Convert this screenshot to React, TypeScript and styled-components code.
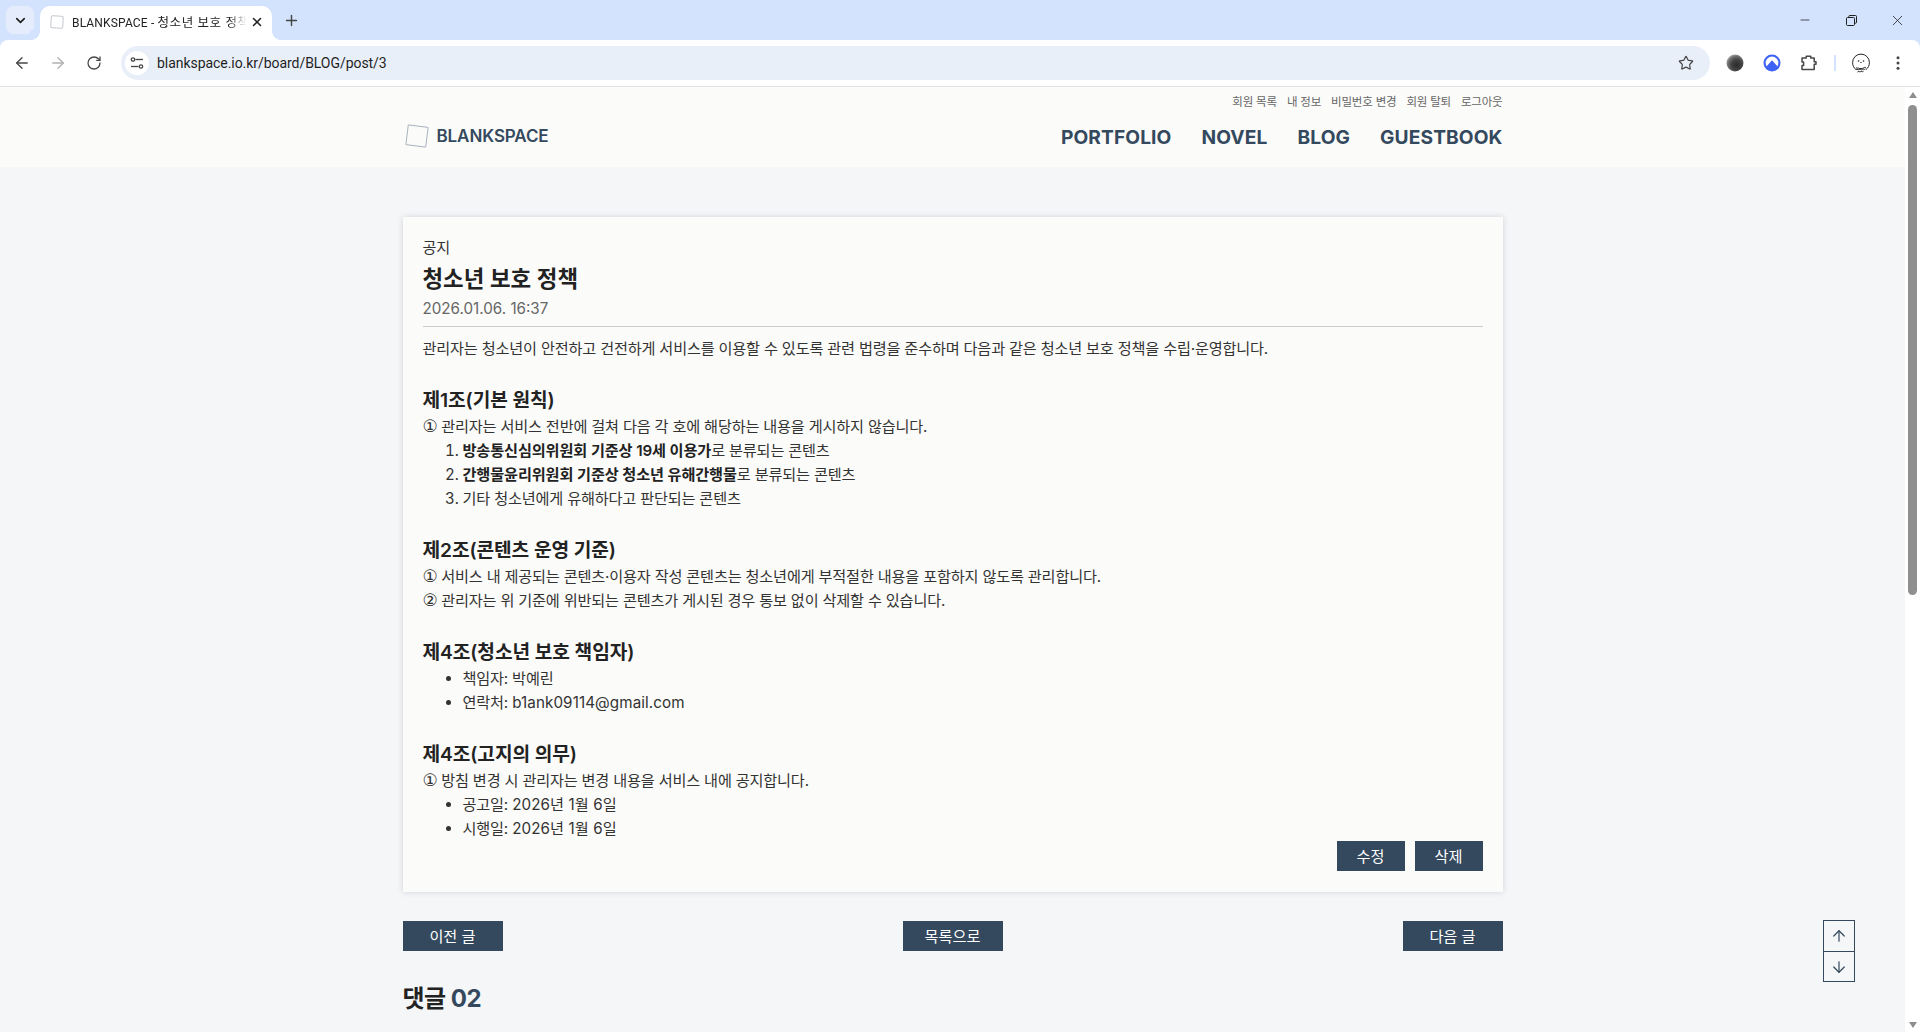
import React from "react";
import styled, { createGlobalStyle } from "styled-components";
import { ChevronDown, X, Plus, ArrowLeft, ArrowRight, RotateCw, Star, ArrowUp, ArrowDown, Minus } from "lucide-react";

const Global = createGlobalStyle`
  html, body { margin: 0; padding: 0; height: 100%; overflow: hidden; }
  #root { height: 100%; }
  * { box-sizing: border-box; }
`;

const Win = styled.div`
  height: 1032px; width: 1920px; display: flex; flex-direction: column; overflow: hidden;
  background: #d3e3fd; font-family: Roboto, "Noto Sans CJK KR", sans-serif;
`;
const TabStrip = styled.div`
  height: 40px; flex: none; display: flex; align-items: flex-end; padding-left: 6px; color: #1f1f1f;
`;
const TabMenu = styled.div`
  width: 28px; height: 28px; border-radius: 8px; background: #e5edfc; margin-bottom: 6px;
  display: flex; align-items: center; justify-content: center;
`;
const Tab = styled.div`
  width: 232px; height: 34px; margin-left: 6px; background: #fff; border-radius: 10px 10px 0 0;
  display: flex; align-items: center; padding: 0 8px 3px 10px; position: relative;
  &::before, &::after { content: ""; position: absolute; bottom: 0; width: 10px; height: 10px; background: radial-gradient(circle at var(--c) 0, #d3e3fd 10px, #fff 10.5px); }
  &::before { left: -10px; --c: 0; }
  &::after { right: -10px; --c: 100%; }
`;
const TabTitle = styled.span`
  flex: 1; font-size: 12px; margin-left: 8px; white-space: nowrap; overflow: hidden; color: #222; letter-spacing: 0.15px;
  -webkit-mask-image: linear-gradient(90deg, #000 88%, transparent 98%);
`;
const TabHangul = styled.span`
  font-size: 12.5px; letter-spacing: 0.6px;
`;
const TabPlus = styled.div`
  width: 28px; height: 28px; margin: 0 0 6px 5px; display: flex; align-items: center; justify-content: center;
`;
const WinControls = styled.div`
  margin-left: auto; display: flex; height: 40px; align-items: center;
`;
const WinBtn = styled.div`
  width: 46px; display: flex; justify-content: center; align-items: center;
`;
const Toolbar = styled.div`
  height: 47px; flex: none; background: #fff; border-radius: 8px 8px 0 0; border-bottom: 1px solid #e3e3e1;
  display: flex; align-items: center; padding-left: 4px; color: #474747;
`;
const NavIcon = styled.div`
  width: 36px; height: 34px; display: flex; align-items: center; justify-content: center;
  color: ${p => p.$dim ? "#b1b1b1" : "#474747"};
`;
const Omni = styled.div`
  width: 1589px; height: 34px; margin-left: 9px; background: #e9eff9; border-radius: 17px;
  display: flex; align-items: center; padding: 0 16px 0 4px;
`;
const SiteIcon = styled.div`
  width: 24px; height: 24px; border-radius: 50%; background: #fff; display: flex; align-items: center; justify-content: center;
`;
const Url = styled.span`
  margin-left: 8px; font-size: 14px; color: #1f1f1f; flex: 1; letter-spacing: -0.05px;
`;
const Ext = styled.div`
  width: 37px; height: 34px; flex: none; display: flex; align-items: center; justify-content: center;
`;
const ExtRow = styled.div`
  display: flex; align-items: center; margin-left: 6.5px;
`;
const Sep = styled.div`
  width: 2px; height: 16px; flex: none; background: #d3e3fd; margin: 0 7px 0 6px;
`;
const Viewport = styled.div`
  flex: 1; min-height: 0; display: flex; position: relative; background: #f5f6f8;
  font-family: Inter, "Noto Sans CJK KR", sans-serif;
`;
const Page = styled.div`
  flex: 1; min-width: 0; overflow: hidden;
`;
const Scrollbar = styled.div`
  width: 15px; flex: none; background: #fff; position: relative; display: flex; flex-direction: column; align-items: center; justify-content: space-between; padding: 5px 0 4px;
`;
const ScrollArrow = styled.div`
  width: 0; height: 0; border-left: 4.5px solid transparent; border-right: 4.5px solid transparent;
  ${p => p.$down ? "border-top: 6px solid #8d8d8d;" : "border-bottom: 6px solid #8d8d8d;"}
`;
const Thumb = styled.div`
  position: absolute; top: 18px; left: 3px; width: 9px; height: 490px; border-radius: 5px; background: #8f8f8f;
`;
const Header = styled.header`
  height: 80px; background: #fbfbf9;
`;
const HeaderInner = styled.div`
  width: 1100px; margin: 0 auto; height: 100%; display: flex; flex-direction: column; padding-top: 8px;
`;
const TopLinks = styled.div`
  display: flex; justify-content: flex-end; gap: 10px; font-size: 11.5px; line-height: 14px; color: #666; letter-spacing: -0.2px;
`;
const MainRow = styled.div`
  display: flex; justify-content: space-between; align-items: center; margin-top: 13px;
`;
const Logo = styled.div`
  display: flex; align-items: center; gap: 7px; color: #34495e; font-size: 17px; font-weight: 600; letter-spacing: -0.1px; margin: -3px 0 0 1px;
`;
const MainNav = styled.nav`
  display: flex; gap: 30px; font-size: 19.2px; font-weight: 700; color: #34495e; line-height: 30px; letter-spacing: 0.1px;
`;
const Main = styled.main`
  width: 1100px; margin: 50px auto 0;
`;
const Card = styled.article`
  background: #fbfbf9; box-shadow: 0 0 6px rgba(30, 40, 60, 0.16); padding: 20px 20px 21px;
  font-size: 15.2px; line-height: 24px; color: #333; letter-spacing: -0.19px;
`;
const Category = styled.div`
  line-height: 20px; height: 20px; padding-top: 1px;
`;
const Title = styled.h1`
  margin: 7px 0 0; font-size: 22.4px; line-height: 30px; font-weight: 600; color: #222; letter-spacing: 0;
`;
const DateLine = styled.div`
  margin-top: 3px; font-size: 15.2px; color: #666; line-height: 24px; letter-spacing: 0;
`;
const Rule = styled.hr`
  border: 0; border-top: 1px solid #ccc; margin: 5px 0 10px;
`;
const Para = styled.p`
  margin: 0;
`;
const Circled = styled.span`
  font-family: "DejaVu Sans", sans-serif; font-size: 17px; line-height: 0; letter-spacing: -0.6px;
`;
const Latin = styled.span`
  letter-spacing: 0.1px;
`;
const ArticleHead = styled.h3`
  margin: 25px 0 0; font-size: 19.2px; line-height: 29px; font-weight: 600; color: #222; letter-spacing: -0.1px;
`;
const Ol = styled.ol`
  margin: 0; padding-left: 40px;
`;
const Ul = styled.ul`
  margin: 0; padding-left: 40px;
`;
const Strong = styled.strong`
  font-weight: 600; color: #222; letter-spacing: -0.12px;
`;
const CardActions = styled.div`
  display: flex; justify-content: flex-end; gap: 10px;
`;
const Btn = styled.button`
  width: ${p => p.$w}px; height: 30px; border: 0; padding: 0 0 2px; background: #34495e; color: #fff;
  font: 400 15.2px Inter, "Noto Sans CJK KR", sans-serif; letter-spacing: 0;
`;
const PostNav = styled.div`
  display: flex; justify-content: space-between; margin-top: 29px;
`;
const CommentTitle = styled.h2`
  margin: 30px 0 0; font-size: 24px; line-height: 36px; font-weight: 700; color: #222; letter-spacing: -0.5px;
`;
const CountNum = styled.span`
  color: #34495e;
`;
const FloatNav = styled.div`
  position: absolute; left: 1823px; top: 833px; width: 32px; display: flex; flex-direction: column; border: 1px solid #34495e;
`;
const FloatBtn = styled.div`
  height: ${p => p.$h}px; display: flex; align-items: center; justify-content: center; color: #34495e;
  & + & { border-top: 1px solid #34495e; }
`;

const LogoMark = () => (
  <svg width="26" height="26" viewBox="0 0 26 26" fill="none">
    <rect x="3" y="3" width="20" height="20" rx="1" stroke="#a9b3bf" strokeWidth="1" transform="rotate(7 13 13)" />
  </svg>
);

const Tune = () => (
  <svg width="16" height="16" viewBox="0 0 16 16" fill="none" stroke="#474747" strokeWidth="1.3">
    <circle cx="4" cy="4.5" r="1.7" /><path d="M6.5 4.5H14" />
    <circle cx="12" cy="11.5" r="1.7" /><path d="M2 11.5h7.5" />
  </svg>
);

const Restore = () => (
  <svg width="11" height="11" viewBox="0 0 11 11" fill="none" stroke="#1f1f1f" strokeWidth="1">
    <rect x="0.5" y="2.5" width="8" height="8" rx="1" /><path d="M2.8 2.5V1.5a1 1 0 0 1 1-1h5.7a1 1 0 0 1 1 1v5.7a1 1 0 0 1-1 1h-.9" />
  </svg>
);

const Dark = () => (
  <svg width="18" height="18" viewBox="0 0 18 18">
    <defs><radialGradient id="dk" cx="0.6" cy="0.62" r="0.72"><stop offset="0" stopColor="#2a2a2a" /><stop offset="0.45" stopColor="#444" /><stop offset="0.75" stopColor="#777" /><stop offset="1" stopColor="#cfcfcf" /></radialGradient></defs>
    <circle cx="9" cy="9" r="8.5" fill="url(#dk)" />
  </svg>
);

const BlueExt = () => (
  <svg width="18" height="18" viewBox="0 0 18 18">
    <circle cx="9" cy="9" r="8.5" fill="#3d62f5" />
    <circle cx="9" cy="9" r="6.4" fill="#fff" />
    <path d="M2.8 13.2 9 6.2l6.2 7A7 7 0 0 1 9 16.2a7 7 0 0 1-6.2-3z" fill="#3d62f5" />
  </svg>
);

const PuzzleIcon = () => (
  <svg width="18" height="18" viewBox="0 0 18 18" fill="none" stroke="#474747" strokeWidth="1.5" strokeLinejoin="round">
    <path d="M2 4h4.2V2.2h4.6V4h3.4v3.8h1.8v2.4h-1.8v5.3H2v-4h1.6V8H2z" />
  </svg>
);

const Avatar = () => (
  <svg width="20" height="22" viewBox="0 0 20 22" fill="none" stroke="#222" strokeWidth="1">
    <path d="M5 17.5C2.8 16 1.6 13.5 1.6 10.5a8.4 8.4 0 0 1 16.8 0c0 3-1.2 5.5-3.4 7" />
    <circle cx="7.5" cy="9" r="0.8" fill="#222" stroke="none" />
    <circle cx="12.5" cy="9" r="0.8" fill="#222" stroke="none" />
    <path d="M9.4 10.5h1.2" />
    <path d="M5 15.5c1 1 2 .4 3 .8s3 .5 4.5-.4 1.5-.4 2.5-.4" />
    <path d="M5 17.5c1.5-.8 2.5.8 3.5 0s2 1 3 0 2 .5 3-.5" />
    <path d="M6.5 20c1-1.5 2 .4 3-.4s2 .9 3-.4" />
  </svg>
);

const More = () => (
  <svg width="16" height="16" viewBox="0 0 16 16" fill="#474747">
    <circle cx="8" cy="2.7" r="1.5" /><circle cx="8" cy="8" r="1.5" /><circle cx="8" cy="13.3" r="1.5" />
  </svg>
);

const FaviconSquare = () => (
  <svg width="14" height="14" viewBox="0 0 14 14" fill="none">
    <rect x="1" y="1" width="12" height="12" rx="1.5" stroke="#c4c8ce" strokeWidth="1" transform="rotate(3 7 7)" />
  </svg>
);

export default function App() {
  return (
    <Win>
      <Global />
      <TabStrip>
        <TabMenu><ChevronDown size={15} strokeWidth={2.6} /></TabMenu>
        <Tab>
          <FaviconSquare />
          <TabTitle>BLANKSPACE - <TabHangul>청소년 보호 정책</TabHangul></TabTitle>
          <X size={14} strokeWidth={2.6} />
        </Tab>
        <TabPlus><Plus size={17} strokeWidth={2} color="#444" /></TabPlus>
        <WinControls>
          <WinBtn><Minus size={14} strokeWidth={1.3} color="#1f1f1f" /></WinBtn>
          <WinBtn><Restore /></WinBtn>
          <WinBtn><X size={17} strokeWidth={1.1} color="#1f1f1f" /></WinBtn>
        </WinControls>
      </TabStrip>
      <Toolbar>
        <NavIcon><ArrowLeft size={18} strokeWidth={1.8} /></NavIcon>
        <NavIcon $dim><ArrowRight size={18} strokeWidth={1.8} /></NavIcon>
        <NavIcon><RotateCw size={16} strokeWidth={1.9} /></NavIcon>
        <Omni>
          <SiteIcon><Tune /></SiteIcon>
          <Url>blankspace.io.kr/board/BLOG/post/3</Url>
          <Star size={16} strokeWidth={1.8} color="#474747" />
        </Omni>
        <ExtRow>
          <Ext><Dark /></Ext>
          <Ext><BlueExt /></Ext>
          <Ext><PuzzleIcon /></Ext>
          <Sep />
          <Ext><Avatar /></Ext>
          <Ext><More /></Ext>
        </ExtRow>
      </Toolbar>
      <Viewport>
        <Page>
          <Header>
            <HeaderInner>
              <TopLinks>
                <span>회원 목록</span><span>내 정보</span><span>비밀번호 변경</span><span>회원 탈퇴</span><span>로그아웃</span>
              </TopLinks>
              <MainRow>
                <Logo><LogoMark />BLANKSPACE</Logo>
                <MainNav><span>PORTFOLIO</span><span>NOVEL</span><span>BLOG</span><span>GUESTBOOK</span></MainNav>
              </MainRow>
            </HeaderInner>
          </Header>
          <Main>
            <Card>
              <Category>공지</Category>
              <Title>청소년 보호 정책</Title>
              <DateLine>2026.01.06. 16:37</DateLine>
              <Rule />
              <Para>관리자는 청소년이 안전하고 건전하게 서비스를 이용할 수 있도록 관련 법령을 준수하며 다음과 같은 청소년 보호 정책을 수립·운영합니다.</Para>
              <ArticleHead>제1조(기본 원칙)</ArticleHead>
              <Para><Circled>①</Circled> 관리자는 서비스 전반에 걸쳐 다음 각 호에 해당하는 내용을 게시하지 않습니다.</Para>
              <Ol>
                <li><Strong>방송통신심의위원회 기준상 19세 이용가</Strong>로 분류되는 콘텐츠</li>
                <li><Strong>간행물윤리위원회 기준상 청소년 유해간행물</Strong>로 분류되는 콘텐츠</li>
                <li>기타 청소년에게 유해하다고 판단되는 콘텐츠</li>
              </Ol>
              <ArticleHead>제2조(콘텐츠 운영 기준)</ArticleHead>
              <Para><Circled>①</Circled> 서비스 내 제공되는 콘텐츠·이용자 작성 콘텐츠는 청소년에게 부적절한 내용을 포함하지 않도록 관리합니다.</Para>
              <Para><Circled>②</Circled> 관리자는 위 기준에 위반되는 콘텐츠가 게시된 경우 통보 없이 삭제할 수 있습니다.</Para>
              <ArticleHead>제4조(청소년 보호 책임자)</ArticleHead>
              <Ul>
                <li>책임자: 박예린</li>
                <li>연락처: <Latin>b1ank09114@gmail.com</Latin></li>
              </Ul>
              <ArticleHead>제4조(고지의 의무)</ArticleHead>
              <Para><Circled>①</Circled> 방침 변경 시 관리자는 변경 내용을 서비스 내에 공지합니다.</Para>
              <Ul>
                <li>공고일: <Latin>2026년 1월 6일</Latin></li>
                <li>시행일: <Latin>2026년 1월 6일</Latin></li>
              </Ul>
              <CardActions>
                <Btn $w={68}>수정</Btn>
                <Btn $w={68}>삭제</Btn>
              </CardActions>
            </Card>
            <PostNav>
              <Btn $w={100}>이전 글</Btn>
              <Btn $w={100}>목록으로</Btn>
              <Btn $w={100}>다음 글</Btn>
            </PostNav>
            <CommentTitle>댓글 <CountNum>02</CountNum></CommentTitle>
          </Main>
        </Page>
        <Scrollbar>
          <ScrollArrow />
          <Thumb />
          <ScrollArrow $down />
        </Scrollbar>
        <FloatNav>
          <FloatBtn $h={30}><ArrowUp size={18} strokeWidth={1.6} /></FloatBtn>
          <FloatBtn $h={30}><ArrowDown size={18} strokeWidth={1.6} /></FloatBtn>
        </FloatNav>
      </Viewport>
    </Win>
  );
}
